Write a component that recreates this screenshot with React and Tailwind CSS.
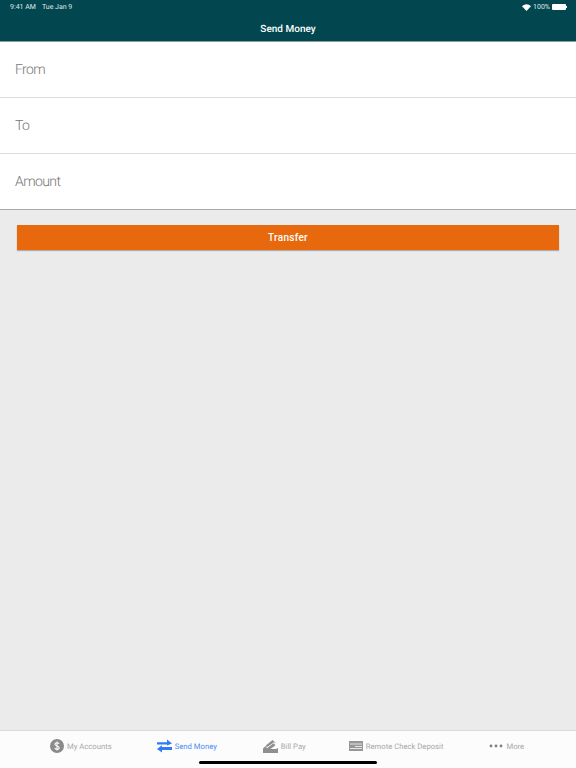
import React from "react";

function Dollar() {
  return (
    <svg width="14" height="14" viewBox="0 0 14 14">
      <circle cx="7" cy="7" r="7" fill="#8a8a8a" />
      <path d="M9.2 4.8C8.8 4 8 3.7 7 3.7c-1.2 0-2.1.6-2.1 1.6 0 2.2 4.3 1.2 4.3 3.4 0 1-.9 1.6-2.2 1.6-1.1 0-1.9-.4-2.3-1.2M7 2.5v9" fill="none" stroke="#fff" strokeWidth="1.1" />
    </svg>
  );
}
function Arrows() {
  return (
    <svg width="15" height="14" viewBox="0 0 15 14">
      <path d="M0 3.2H10V0.4L15 4.4 10 6.4V5.4H0z" fill="#2f7bf6" />
      <path d="M15 8H5V6.2L0 10 5 13.6V11H15z" fill="#2f7bf6" />
    </svg>
  );
}
function Bill() {
  return (
    <svg width="15" height="13" viewBox="0 0 15 13">
      <path d="M0 8.5L2.5 6 4 8.2 10.5 3.2 12.5 5.2 7.5 9H13L15 8V13H0z" fill="#8f8f8f" />
      <path d="M2.8 5.6L9.5 0 13.5 3.4 11 2.2 3.8 7.2z" fill="#8f8f8f" />
    </svg>
  );
}
function Check() {
  return (
    <svg width="14" height="10" viewBox="0 0 14 10">
      <rect width="14" height="10" fill="#979797" />
      <rect x="1" y="2.5" width="12" height="1" fill="#e4e4e4" />
      <rect x="6" y="5" width="7" height="1" fill="#e4e4e4" />
      <rect x="1" y="7" width="12" height="1" fill="#e4e4e4" />
    </svg>
  );
}
function Dots() {
  return (
    <svg width="14" height="4" viewBox="0 0 14 4">
      <circle cx="2" cy="2" r="1.4" fill="#808080" />
      <circle cx="7" cy="2" r="1.4" fill="#808080" />
      <circle cx="12" cy="2" r="1.4" fill="#808080" />
    </svg>
  );
}

function Field({ label, cls }) {
  return (
    <div className={"flex items-center bg-white pl-[15px] text-[14px] tracking-[-0.6px] font-light text-[#767676] " + cls}>
      {label}
    </div>
  );
}

function Tab({ icon, label, active, cls }) {
  return (
    <div className={"flex items-center gap-[3px] text-[7.7px] font-normal " + (active ? "text-[#4a8cf7] " : "text-[#a8a8a8] ") + cls}>
      {icon}
      <span className="pt-[1px]">{label}</span>
    </div>
  );
}

export default function App() {
  return (
    <div className="relative w-[576px] h-[768px] flex flex-col bg-[#ebebeb] overflow-hidden font-['Roboto',sans-serif] [text-rendering:geometricPrecision]">
      <div className="h-[42px] shrink-0 bg-[#02474f] border-b border-[#8f9c9e] text-white relative">
        <div className="flex justify-between items-center h-[14px] pl-[10px] pr-[9px] text-[7px] text-[#dfe9ea]">
          <div className="flex gap-[6px]">
            <span>9:41 AM</span>
            <span>Tue Jan 9</span>
          </div>
          <div className="flex items-center gap-[2px]">
            <svg width="9" height="7" viewBox="0 0 18 14">
              <path d="M9 14L0 4.5C5-1 13-1 18 4.5z" fill="#fff" />
            </svg>
            <span>100%</span>
            <div className="flex items-center">
              <div className="w-[14px] h-[6px] bg-white rounded-[1px]" />
              <div className="w-[1px] h-[2px] bg-white" />
            </div>
          </div>
        </div>
        <div className="text-center text-[10px] font-medium mt-[2px] leading-[28px]">Send Money</div>
      </div>
      <Field label="From" cls="h-[56px] pt-[2px] border-b border-[#dedede]" />
      <Field label="To" cls="h-[56px] pt-[1px] border-b border-[#dedede]" />
      <Field label="Amount" cls="h-[56px] pt-[1px] border-b border-[#a9a9a9]" />
      <div className="px-[17px] pt-[15px] flex-1">
        <button className="block w-full h-[25px] bg-[#e8690d] text-white text-[10px] font-medium tracking-[0.3px] shadow-[0_1px_1px_rgba(0,0,0,0.25)]">
          Transfer
        </button>
      </div>
      <div className="h-[38px] shrink-0 bg-[#fcfcfc] border-t border-[#dcdcdc] flex items-center pb-[7px]">
        <Tab icon={<Dollar />} label="My Accounts" cls="ml-[50px]" />
        <Tab active icon={<Arrows />} label="Send Money" cls="ml-[45px]" />
        <Tab icon={<Bill />} label="Bill Pay" cls="ml-[46px]" />
        <Tab icon={<Check />} label="Remote Check Deposit" cls="ml-[43px]" />
        <Tab icon={<Dots />} label="More" cls="ml-[46px]" />
      </div>
      <div className="absolute left-[199px] bottom-[4px] w-[178px] h-[3px] rounded-full bg-black" />
    </div>
  );
}
